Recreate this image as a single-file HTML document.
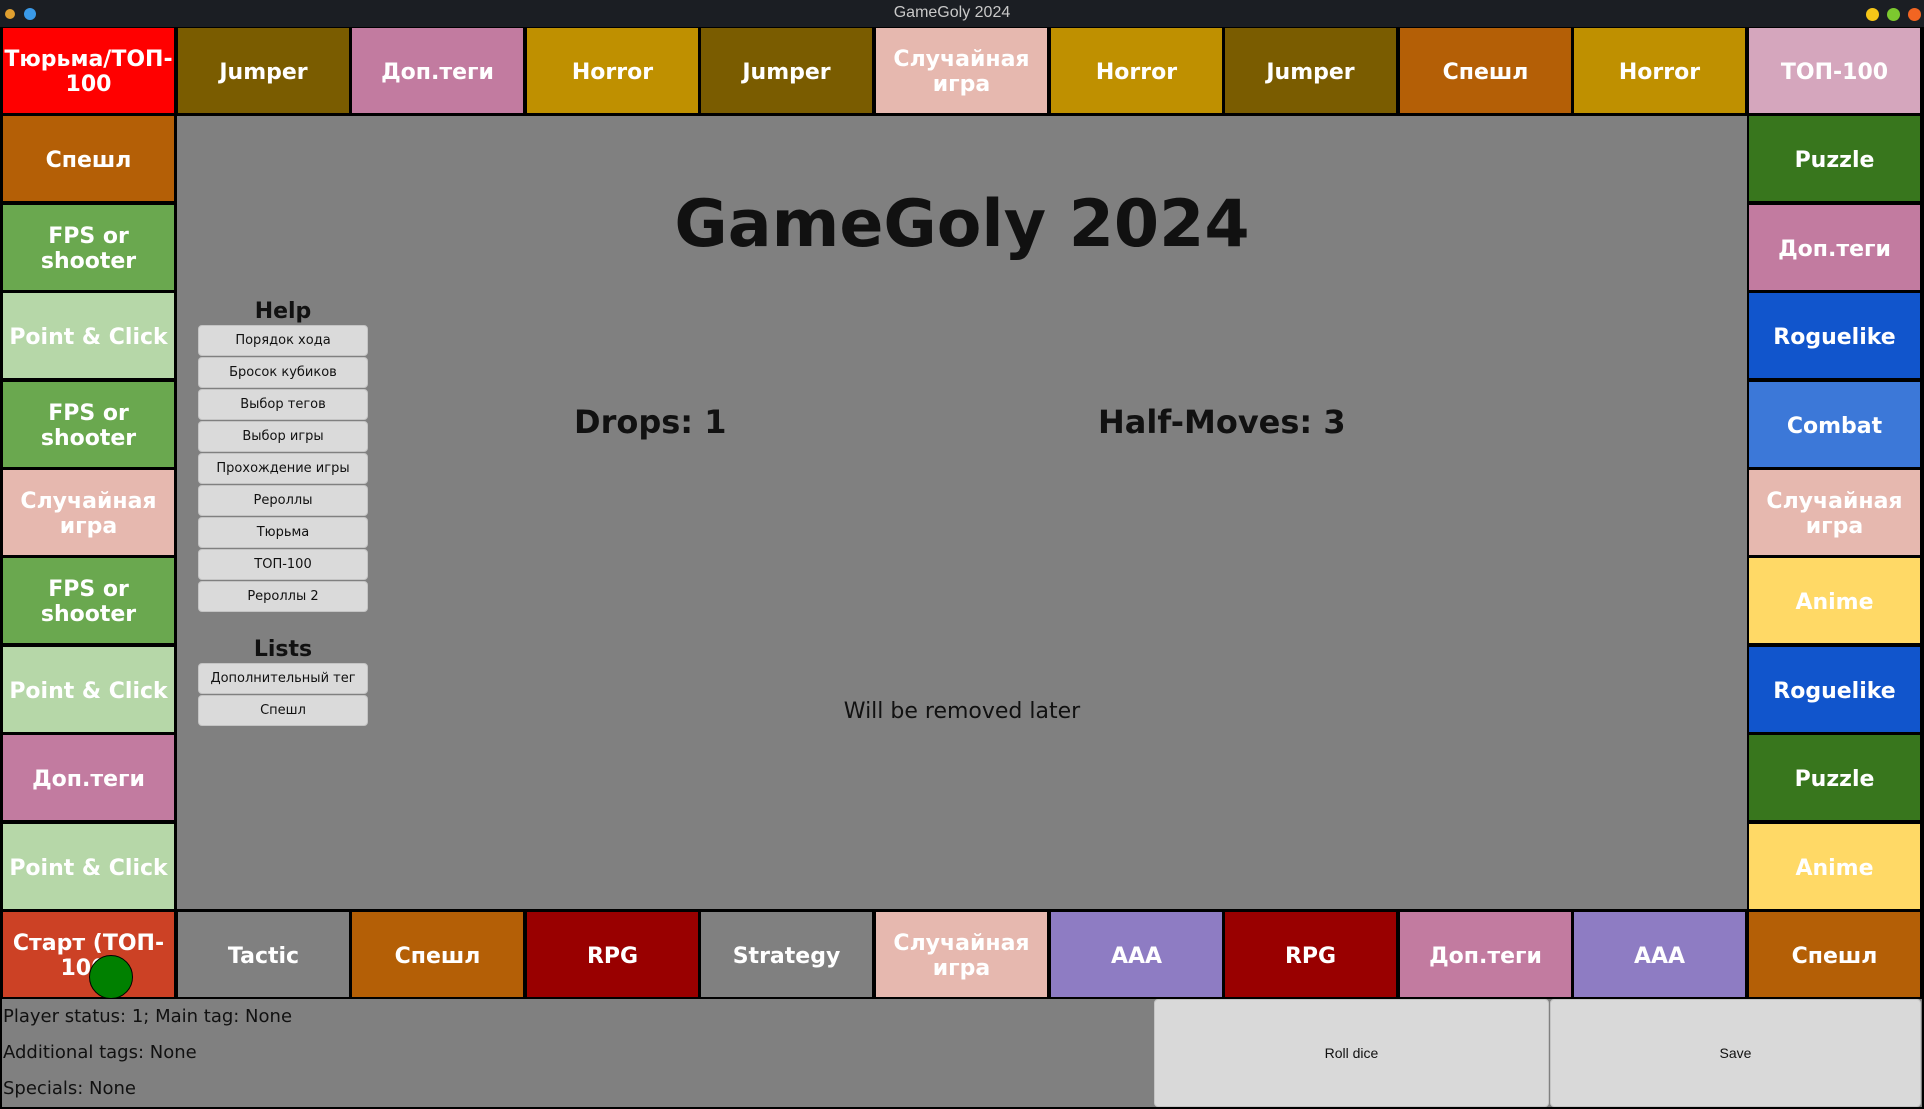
<!DOCTYPE html>
<html><head><meta charset="utf-8"><style>
*{margin:0;padding:0;box-sizing:border-box}
body{width:1924px;height:1109px;overflow:hidden;background:#000;position:relative;font-family:"DejaVu Sans","Liberation Sans",sans-serif}
.tb{position:absolute;left:0;top:0;width:1924px;height:27px;background:#1b1e23}
.tb .t{position:absolute;left:0;width:1904px;top:4px;text-align:center;color:#c8c8c8;font:16px "Liberation Sans",sans-serif}
.dot{position:absolute;border-radius:50%}
.c{position:absolute;width:171px;height:85px;display:flex;align-items:center;justify-content:center;text-align:center;color:#fff;font-weight:bold;font-size:22px;line-height:25px;overflow:visible;padding-top:3px}
.c span{display:block;width:178px;flex:none;overflow-wrap:anywhere}
.center{position:absolute;left:177px;top:116px;width:1570px;height:793px;background:#808080}
.info{position:absolute;left:2px;top:999px;width:1920px;height:108px;background:#808080}
.info p{position:absolute;left:1px;font-size:18px;color:#111;white-space:nowrap}
.btn{position:absolute;background:#dadada;border:1px solid #c4c4c4;border-radius:4px;display:flex;align-items:center;justify-content:center;font-size:13px;color:#111}
.h{position:absolute;font-weight:bold;font-size:22px;color:#111;width:170px;text-align:center;left:198px}
</style></head><body>
<div class="tb"><div class="t">GameGoly 2024</div>
<div class="dot" style="left:5px;top:9px;width:10px;height:10px;background:#e0a030"></div>
<div class="dot" style="left:24px;top:8px;width:12px;height:12px;background:#3a9ae8"></div>
<div class="dot" style="left:1866px;top:8px;width:13px;height:13px;background:#f5c518"></div>
<div class="dot" style="left:1887px;top:8px;width:13px;height:13px;background:#7cc92f"></div>
<div class="dot" style="left:1908px;top:8px;width:13px;height:13px;background:#f26522"></div>
</div>
<div class="center"></div>

<div class="c" style="left:3px;top:28px;background:#ff0000"><span>Тюрьма/ТОП-&#8203;100</span></div>
<div class="c" style="left:178px;top:28px;background:#7a5c00"><span>Jumper</span></div>
<div class="c" style="left:352px;top:28px;background:#c27ba0"><span>Доп.теги</span></div>
<div class="c" style="left:527px;top:28px;background:#bf9000"><span>Horror</span></div>
<div class="c" style="left:701px;top:28px;background:#7a5c00"><span>Jumper</span></div>
<div class="c" style="left:876px;top:28px;background:#e6b8af"><span>Случайная игра</span></div>
<div class="c" style="left:1051px;top:28px;background:#bf9000"><span>Horror</span></div>
<div class="c" style="left:1225px;top:28px;background:#7a5c00"><span>Jumper</span></div>
<div class="c" style="left:1400px;top:28px;background:#b45f06"><span>Спешл</span></div>
<div class="c" style="left:1574px;top:28px;background:#bf9000"><span>Horror</span></div>
<div class="c" style="left:1749px;top:28px;background:#d5a6bd"><span>ТОП-100</span></div>

<div class="c" style="left:3px;top:116px;background:#b45f06"><span>Спешл</span></div>
<div class="c" style="left:3px;top:205px;background:#6aa84f"><span>FPS or shooter</span></div>
<div class="c" style="left:3px;top:293px;background:#b6d7a8"><span>Point &amp; Click</span></div>
<div class="c" style="left:3px;top:382px;background:#6aa84f"><span>FPS or shooter</span></div>
<div class="c" style="left:3px;top:470px;background:#e6b8af"><span>Случайная игра</span></div>
<div class="c" style="left:3px;top:558px;background:#6aa84f"><span>FPS or shooter</span></div>
<div class="c" style="left:3px;top:647px;background:#b6d7a8"><span>Point &amp; Click</span></div>
<div class="c" style="left:3px;top:735px;background:#c27ba0"><span>Доп.теги</span></div>
<div class="c" style="left:3px;top:824px;background:#b6d7a8"><span>Point &amp; Click</span></div>

<div class="c" style="left:1749px;top:116px;background:#38761d"><span>Puzzle</span></div>
<div class="c" style="left:1749px;top:205px;background:#c27ba0"><span>Доп.теги</span></div>
<div class="c" style="left:1749px;top:293px;background:#1155cc"><span>Roguelike</span></div>
<div class="c" style="left:1749px;top:382px;background:#3c78d8"><span>Combat</span></div>
<div class="c" style="left:1749px;top:470px;background:#e6b8af"><span>Случайная игра</span></div>
<div class="c" style="left:1749px;top:558px;background:#ffd966"><span>Anime</span></div>
<div class="c" style="left:1749px;top:647px;background:#1155cc"><span>Roguelike</span></div>
<div class="c" style="left:1749px;top:735px;background:#38761d"><span>Puzzle</span></div>
<div class="c" style="left:1749px;top:824px;background:#ffd966"><span>Anime</span></div>

<div class="c" style="left:3px;top:912px;background:#cc4125"><span>Старт&nbsp;(ТОП-&#8203;100)</span></div>
<div class="c" style="left:178px;top:912px;background:#808080"><span>Tactic</span></div>
<div class="c" style="left:352px;top:912px;background:#b45f06"><span>Спешл</span></div>
<div class="c" style="left:527px;top:912px;background:#990000"><span>RPG</span></div>
<div class="c" style="left:701px;top:912px;background:#808080"><span>Strategy</span></div>
<div class="c" style="left:876px;top:912px;background:#e6b8af"><span>Случайная игра</span></div>
<div class="c" style="left:1051px;top:912px;background:#8e7cc3"><span>AAA</span></div>
<div class="c" style="left:1225px;top:912px;background:#990000"><span>RPG</span></div>
<div class="c" style="left:1400px;top:912px;background:#c27ba0"><span>Доп.теги</span></div>
<div class="c" style="left:1574px;top:912px;background:#8e7cc3"><span>AAA</span></div>
<div class="c" style="left:1749px;top:912px;background:#b45f06"><span>Спешл</span></div>
<div class="dot" style="left:89px;top:955px;width:44px;height:44px;background:#008000;border:1px solid #000"></div>

<div style="position:absolute;left:177px;width:1570px;top:187px;text-align:center;font-weight:bold;font-size:65px;color:#111">GameGoly 2024</div>
<div style="position:absolute;left:574px;top:403px;font-weight:bold;font-size:32px;color:#111">Drops: 1</div>
<div style="position:absolute;left:1098px;top:403px;font-weight:bold;font-size:32px;color:#111">Half-Moves: 3</div>
<div style="position:absolute;left:177px;width:1570px;top:699px;text-align:center;font-size:22px;color:#111">Will be removed later</div>

<div class="h" style="top:299px">Help</div>
<div class="btn" style="left:198px;top:325px;width:170px;height:31px">Порядок хода</div>
<div class="btn" style="left:198px;top:357px;width:170px;height:31px">Бросок кубиков</div>
<div class="btn" style="left:198px;top:389px;width:170px;height:31px">Выбор тегов</div>
<div class="btn" style="left:198px;top:421px;width:170px;height:31px">Выбор игры</div>
<div class="btn" style="left:198px;top:453px;width:170px;height:31px">Прохождение игры</div>
<div class="btn" style="left:198px;top:485px;width:170px;height:31px">Рероллы</div>
<div class="btn" style="left:198px;top:517px;width:170px;height:31px">Тюрьма</div>
<div class="btn" style="left:198px;top:549px;width:170px;height:31px">ТОП-100</div>
<div class="btn" style="left:198px;top:581px;width:170px;height:31px">Рероллы 2</div>
<div class="h" style="top:637px">Lists</div>
<div class="btn" style="left:198px;top:663px;width:170px;height:31px">Дополнительный тег</div>
<div class="btn" style="left:198px;top:695px;width:170px;height:31px">Спешл</div>

<div class="info">
<p style="top:7px">Player status: 1; Main tag: None</p>
<p style="top:43px">Additional tags: None</p>
<p style="top:79px">Specials: None</p>
</div>
<div class="btn" style="left:1154px;top:999px;width:395px;height:108px;background:#d9d9d9;font-family:'Liberation Sans',sans-serif;font-size:14px">Roll dice</div>
<div class="btn" style="left:1550px;top:999px;width:371px;height:108px;background:#d9d9d9;font-family:'Liberation Sans',sans-serif;font-size:14px">Save</div>
</body></html>
